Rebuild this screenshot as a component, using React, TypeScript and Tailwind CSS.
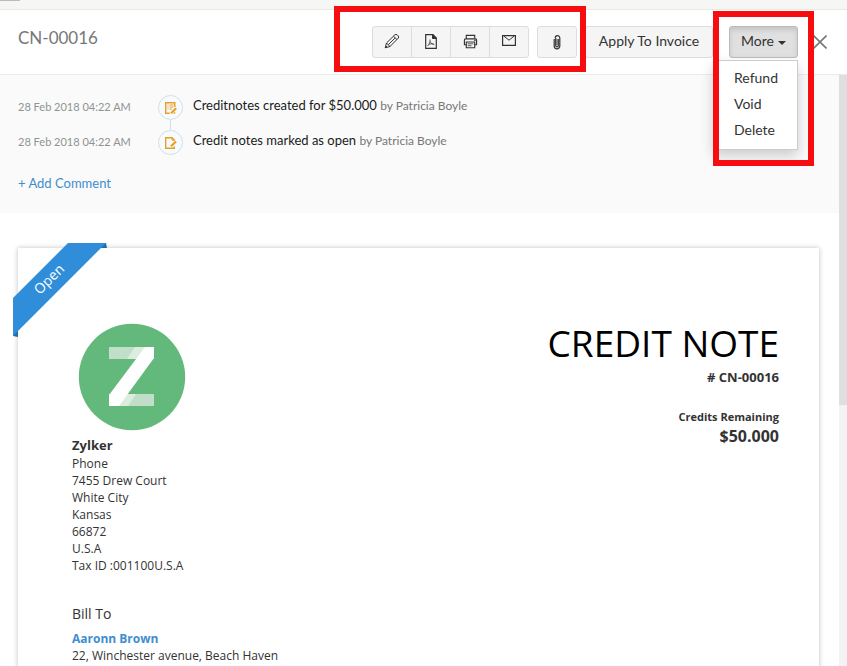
import type { ReactNode } from "react";

const iconProps = {
  fill: "none",
  stroke: "#333333",
  "aria-hidden": true,
} as const;

const PencilIcon = () => (
  <svg {...iconProps} width="16" height="16" viewBox="0 0 16 16" strokeLinejoin="round">
    <path d="M1.2 14.8 2.5 10 10.8 1.9Q12 .8 13.2 1.9L14.1 2.8Q15.3 4 14.2 5.2L6 13.5Z" />
    <path d="M2.5 10 6 13.5M9.5 3.2 13 6.6M4.3 11.7 11.2 4.9M1.2 14.8l1.8-1.7" />
  </svg>
);

const PdfIcon = () => (
  <svg {...iconProps} width="12" height="15" viewBox="0 0 12 15">
    <path d="M.7.7H8L11.3 4v10.3H.7Z" strokeWidth="1.2" />
    <path d="M7.5.5v4h4Z" fill="#333333" />
    <path d="M5 5.5c.3 2-.4 4.5-2.5 6.5M5.2 7.5c.5 1.5 1.8 2.8 4 3M3.5 10.7c1.5-.9 3.2-1.2 5-.8" strokeWidth=".8" />
  </svg>
);

const PrinterIcon = () => (
  <svg {...iconProps} width="15" height="15" viewBox="0 0 16 16" strokeWidth="1.2">
    <path d="M3.5 5V1.500h9V5" />
    <path d="M3.5 11.5h-2v-5q0-1.300 1.200-1.300h10.600q1.200 0 1.200 1.300v5h-2" />
    <path d="M3.5 8.5h9v6.200h-9Z" />
    <path d="M5 10.5h6M5 12.500h4" strokeWidth=".9" />
    <path d="M12 6.800h1.500" />
  </svg>
);

const MailIcon = () => (
  <svg {...iconProps} className="mb-0.5" width="14" height="11" viewBox="0 0 14 11">
    <path d="M.6.6h12.800v9.800H.6Z" strokeWidth="1.2" />
    <path d="M2 1.200 7 5.200 12 1.200" />
  </svg>
);

const ClipIcon = () => (
  <svg {...iconProps} width="8" height="15" viewBox="0 0 8 15" strokeWidth="1.2">
    <path d="M1.200 4v7a2.800 2.800 0 0 0 5.600 0V3a2.300 2.300 0 0 0-4.600 0" />
    <path d="M2.700 3v7.500a1.300 1.300 0 0 0 2.600 0V4" />
    <path d="M4 4v6" strokeWidth=".8" />
  </svg>
);

const CloseIcon = () => (
  <svg width="14" height="14" viewBox="0 0 14 14" fill="none" stroke="#777777" strokeWidth="1.6" aria-hidden>
    <path d="M.5.5 13.5 13.5M13.5.5.5 13.5" />
  </svg>
);

const NoteLinesIcon = () => (
  <svg width="12" height="12" viewBox="0 0 12 12" fill="none" stroke="#eb9d22" aria-hidden>
    <path d="M9.800 5V.7H.7v10.600h4" strokeWidth="1.4" />
    <path d="M2.500 3h1M4.500 3h4M2.500 5h1M4.500 5h4M2.500 7h1M4.500 7h2.500" strokeWidth="1" />
    <path d="M6 11.200 11.200 6.200" strokeWidth="2.200" />
    <path d="M8.500 11.300h1.300V10" />
  </svg>
);

const NoteEditIcon = () => (
  <svg width="12" height="12" viewBox="0 0 12 12" fill="none" stroke="#eb9d22" aria-hidden>
    <path d="M9.300 3.800V3L7 .7H.7v10.600h8.600V9.500" strokeWidth="1.4" />
    <path d="M6 9.200 11 4.500" strokeWidth="2.200" />
    <path d="M7 .5v2.700h2.500" strokeWidth="1" />
  </svg>
);

const Logo = () => (
  <svg className="ml-1.5 block" width="108" height="108" viewBox="0 0 108 108" role="img" aria-label="Zylker logo">
    <circle cx="54" cy="54" r="53.2" fill="#62b97b" />
    <path d="M31 24h45v12H31Z" fill="#c1dfc8" />
    <path d="M31 71h45v12H31Z" fill="#c1dfc8" />
    <path d="M57 24h19L62 36H49Z" fill="#dcecdf" />
    <path d="M45 71h13L50 83H31Z" fill="#dcecdf" />
    <path d="M67 24h9v11L41 83H31V72Z" fill="#ffffff" />
  </svg>
);

const tools: { label: string; icon: ReactNode }[] = [
  { label: "Edit", icon: <PencilIcon /> },
  { label: "PDF", icon: <PdfIcon /> },
  { label: "Print", icon: <PrinterIcon /> },
  { label: "Email", icon: <MailIcon /> },
];

const history = [
  { date: "28 Feb 2018 04:22 AM", text: "Creditnotes created for $50.000", by: "Patricia Boyle", icon: <NoteLinesIcon /> },
  { date: "28 Feb 2018 04:22 AM", text: "Credit notes marked as open", by: "Patricia Boyle", icon: <NoteEditIcon /> },
];

const address = ["Phone", "7455 Drew Court", "White City", "Kansas", "66872", "U.S.A", "Tax ID :001100U.S.A"];

function Header() {
  return (
    <header className="relative z-10 flex h-[65px] shrink-0 items-start justify-between border-b border-[#ebebeb] bg-white pl-[18px] pr-5">
      <h1 className="pt-4 text-[17px] leading-6 text-[#777777]">CN-00016</h1>
      <div className="flex items-center pt-4">
        <div className="flex h-8 w-[157px] divide-x divide-[#dddddd] rounded-[3px] border border-[#dddddd] bg-[#f5f5f5]">
          {tools.map((t) => (
            <button key={t.label} aria-label={t.label} className="flex flex-1 items-center justify-center pb-0.5">
              {t.icon}
            </button>
          ))}
        </div>
        <button aria-label="Attach" className="ml-2 flex h-8 w-10 items-center justify-center rounded-[3px] border border-[#dddddd] bg-[#f5f5f5]">
          <ClipIcon />
        </button>
        <button className="ml-2 h-8 w-32 whitespace-nowrap rounded-[3px] border border-[#dddddd] bg-[#f5f5f5] pb-0.5 text-sm text-[#333333]">
          Apply To Invoice
        </button>
        <div className="relative ml-4">
          <button
            aria-haspopup="menu"
            aria-expanded="true"
            className="flex h-8 w-[69px] items-center justify-center gap-1 rounded-[3px] border border-[#bbbbbb] bg-[#e0e0e0] pb-0.5 text-sm text-[#333333] shadow-[inset_0_3px_5px_rgba(0,0,0,0.12)]"
          >
            More
            <span className="mt-1 border-x-4 border-t-4 border-x-transparent border-t-[#333333]" />
          </button>
          <ul
            role="menu"
            className="absolute right-0 top-[34px] w-[85px] border border-[#cccccc] bg-white pb-1.5 pt-1 text-sm text-[#333333] shadow-[0_6px_12px_rgba(0,0,0,0.18)]"
          >
            {["Refund", "Void", "Delete"].map((item) => (
              <li key={item} role="none">
                <button role="menuitem" className="block h-[26px] w-full pl-5 text-left">
                  {item}
                </button>
              </li>
            ))}
          </ul>
        </div>
        <button aria-label="Close" className="ml-[15px]">
          <CloseIcon />
        </button>
      </div>
      <div className="pointer-events-none absolute -top-1 right-[261px] h-[66px] w-[252px] border-[6px] border-[#f60d10]" />
      <div className="pointer-events-none absolute right-[33px] top-px h-[155px] w-[101px] border-[6px] border-[#f60d10]" />
    </header>
  );
}

function History() {
  return (
    <section className="h-[138px] bg-[#fafafa] px-[18px] pt-5">
      <ul>
        {history.map((h, i) => (
          <li key={h.text} className="flex h-[35px] items-start">
            <time className="w-[140px] text-[11px] leading-6 text-[#8c9494]">{h.date}</time>
            <div className="flex flex-col items-center">
              <span className="flex size-[25px] items-center justify-center rounded-full border border-[#d5dfe5] bg-[#f6fbff]">
                {h.icon}
              </span>
              {i < history.length - 1 && <span className="h-2.5 w-px bg-[#d5dfe5]" />}
            </div>
            <p className="ml-2.5 text-[13px] leading-5 text-[#1a1a1a]">
              {h.text} <span className="text-xs text-[#777777]">by {h.by}</span>
            </p>
          </li>
        ))}
      </ul>
      <a href="#comment" className="mt-2 inline-block text-[13px] leading-5 text-[#408dd0]">
        + Add Comment
      </a>
    </section>
  );
}

function Ribbon() {
  return (
    <div className="absolute -left-[5px] -top-[5px] size-[94px]">
      <svg className="block" width="94" height="94" viewBox="0 0 94 94" aria-hidden>
        <path d="M88 0h5l1 5h-6ZM0 88v5l5 1v-6Z" fill="#1f6dac" />
        <path d="M55 0H93L0 93V55Z" fill="#2f8dda" />
      </svg>
      <span className="absolute left-4 top-7 w-10 -rotate-45 text-center text-sm leading-4 text-white">Open</span>
    </div>
  );
}

function CreditNote() {
  return (
    <article className="relative ml-[18px] mr-5 mt-[35px] min-h-[600px] bg-white pl-[54px] pr-10 pt-[75px] font-['Open_Sans','Noto_Sans',sans-serif] text-xs leading-[17px] text-[#333333] shadow-[0_0_5px_rgba(0,0,0,0.25)]">
      <Ribbon />
      <div className="flex items-start justify-between">
        <div>
          <Logo />
          <p className="pt-1 text-[13px] font-bold leading-5">Zylker</p>
          {address.map((line) => (
            <p key={line}>{line}</p>
          ))}
        </div>
        <div className="text-right font-bold">
          <h2 className="text-[37px] font-normal leading-10 text-black">CREDIT NOTE</h2>
          <p className="pt-1 text-[13px] leading-5"># CN-00016</p>
          <p className="pt-[22px] text-[11px] leading-4">Credits Remaining</p>
          <p className="pt-px text-base leading-5">$50.000</p>
        </div>
      </div>
      <div className="pt-[30px]">
        <h3 className="text-sm leading-5">Bill To</h3>
        <a href="#customer" className="mt-1.5 block font-bold text-[#408dd0]">
          Aaronn Brown
        </a>
        <p>22, Winchester avenue, Beach Haven</p>
      </div>
    </article>
  );
}

export default function App() {
  return (
    <div className="flex h-screen flex-col overflow-hidden bg-white font-[Lato,sans-serif]">
      <div className="h-2.5 shrink-0 border-b border-[#e8e8e6] bg-[#f6f6f5]">
        <div className="h-px w-5 bg-[#bbbbbb]" />
      </div>
      <Header />
      <div className="flex min-h-0 flex-1">
        <main className="min-w-0 flex-1 overflow-hidden">
          <History />
          <CreditNote />
        </main>
        <div className="w-2 bg-[#f3f3f3]">
          <div className="h-[330px] bg-[#dfdfdf]" />
        </div>
      </div>
    </div>
  );
}
